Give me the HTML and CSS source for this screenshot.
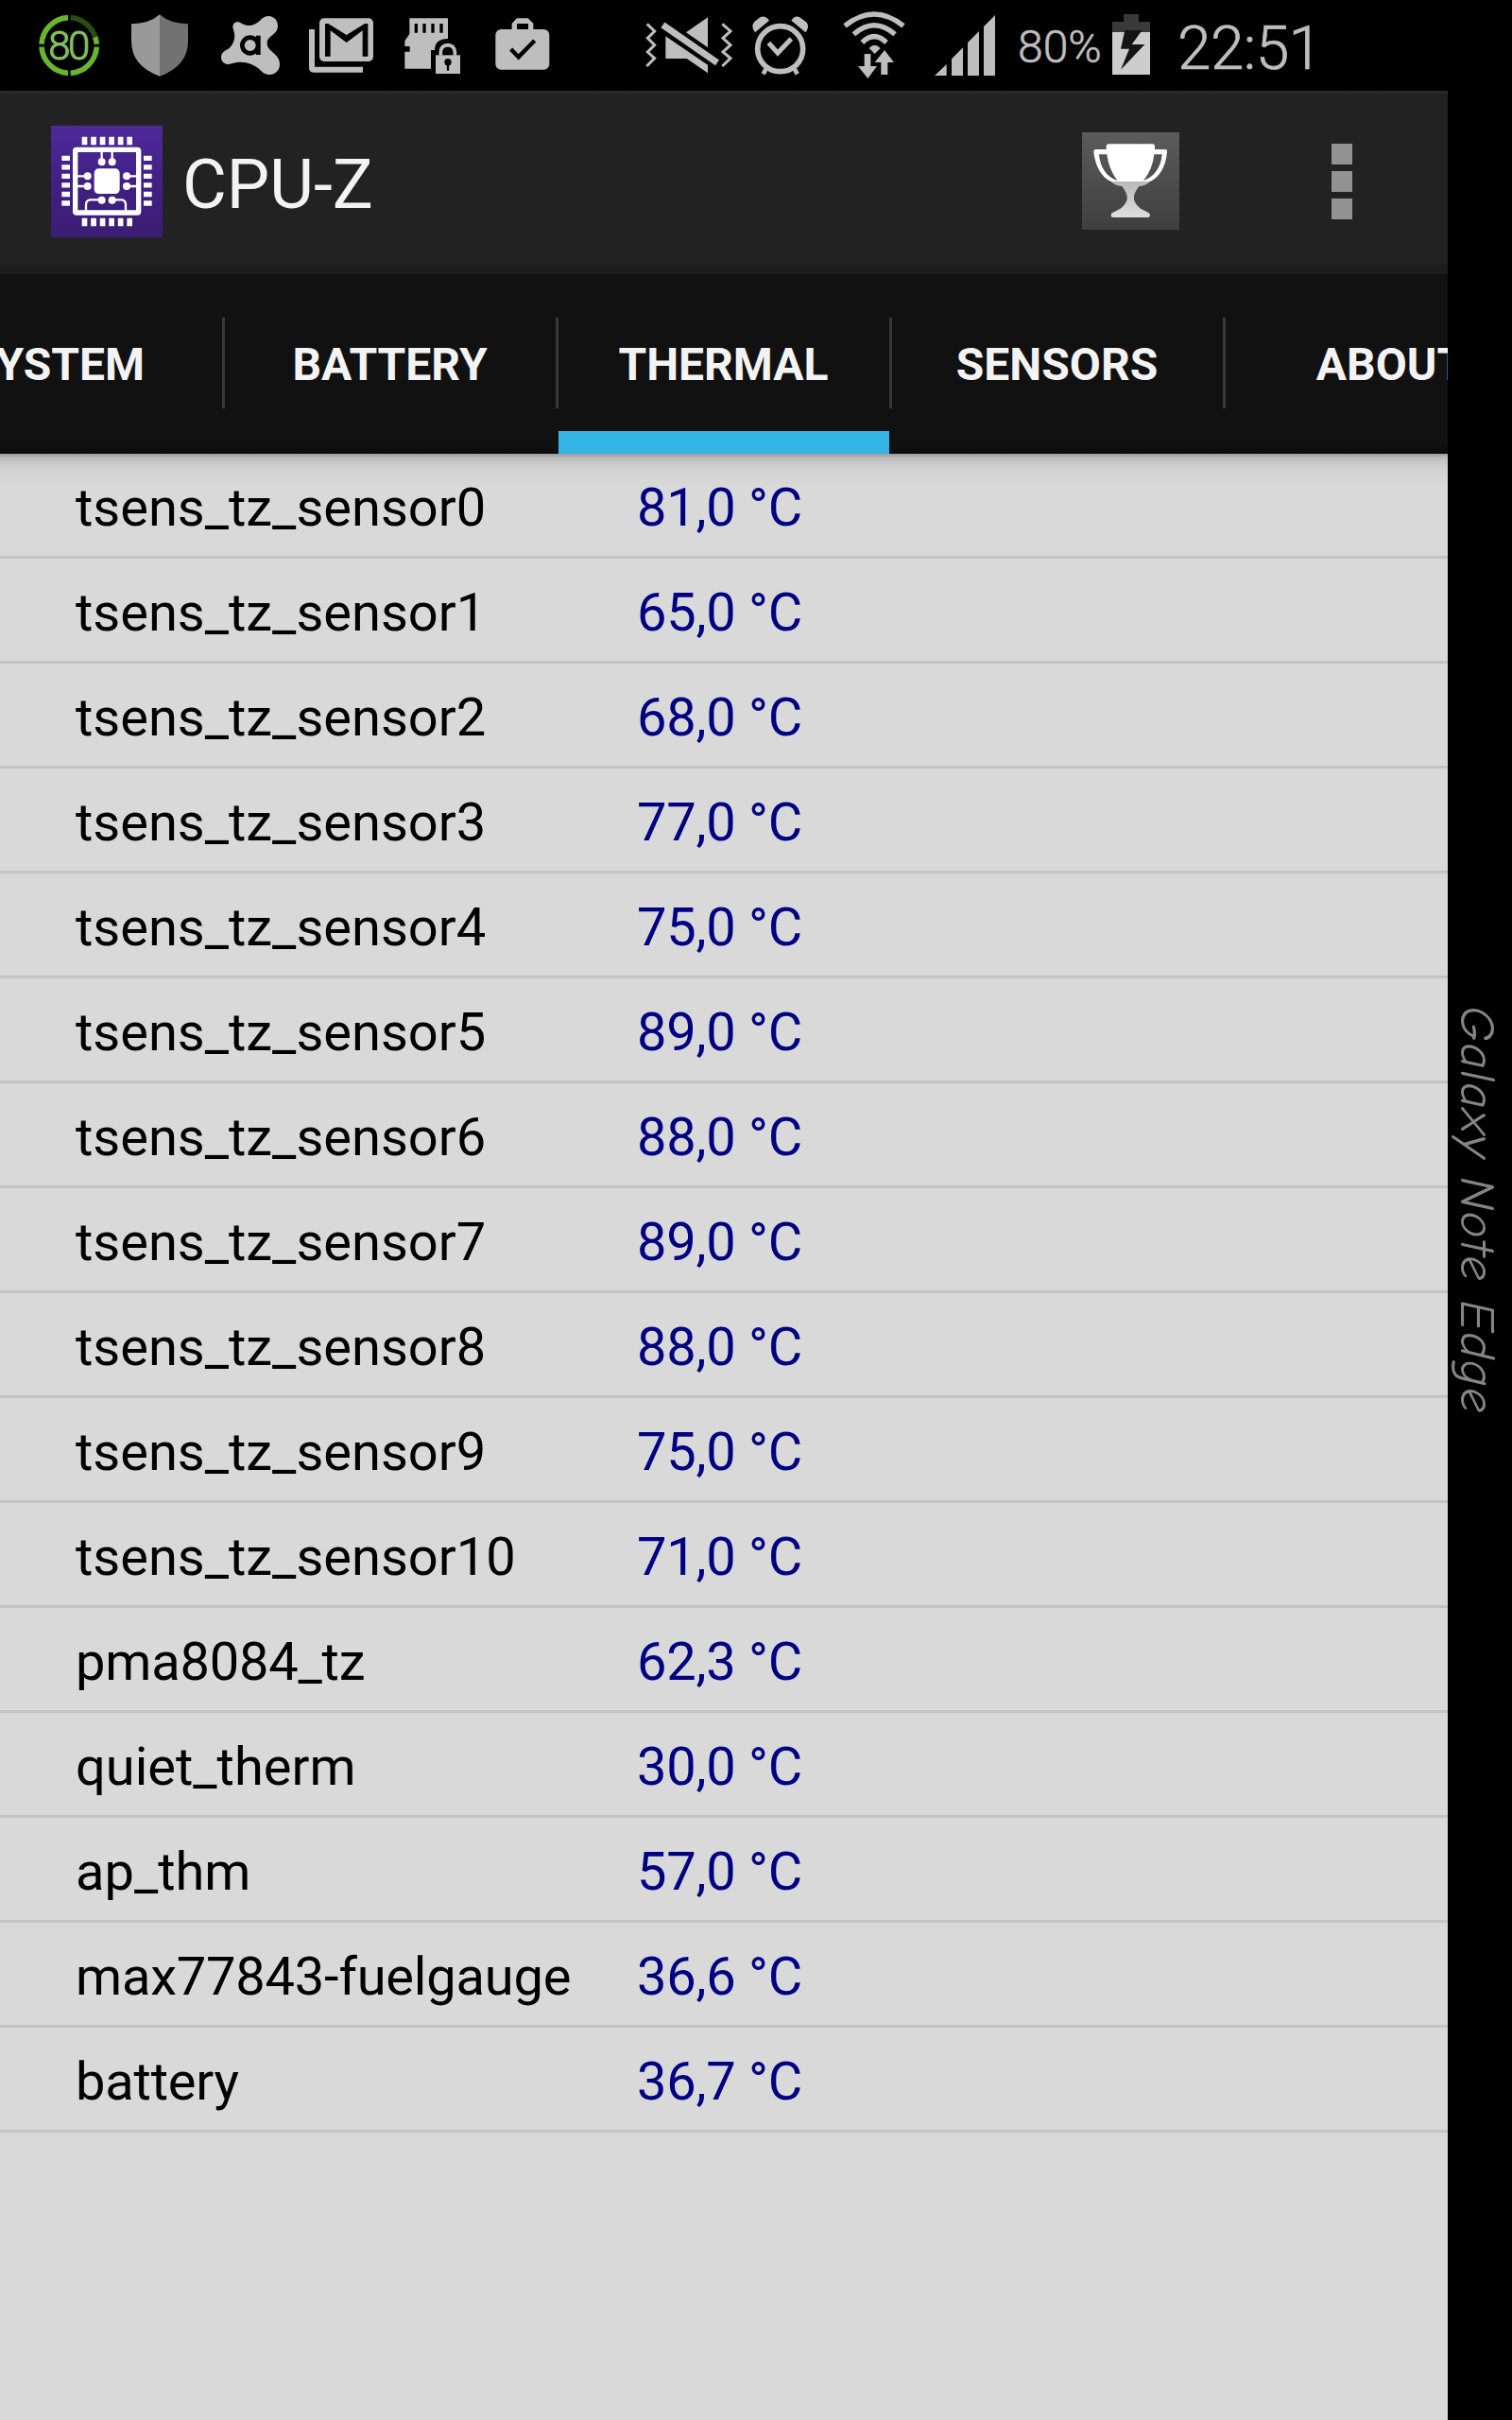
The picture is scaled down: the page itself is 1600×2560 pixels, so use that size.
FILE: index.html
```html
<!DOCTYPE html>
<html lang="en">
<head>
    <meta charset="UTF-8">
    <meta name="viewport" content="width=device-width, initial-scale=1.0">
    <title>CPU-Z</title>
    <link rel="stylesheet" href="styles.css">
</head>
<body>
    <div class="status-bar">
        <div class="notis">
            <svg class="icon" viewBox="75 0 288 288">
                <g fill="none" stroke="#68b52f" stroke-width="17">
                    <path d="M216 56A89 89 0 0 0 132 140"/>
                    <path d="M132 149A89 89 0 0 0 216 232"/>
                    <path d="M224 232A89 89 0 0 0 307 149"/>
                    <path d="M224 56A89 89 0 0 1 303 120" stroke="#294d13"/>
                    <path d="M302 118Q306 129 307 140"/>
                </g>
                <text class="ring-text" x="216" y="188">80</text>
            </svg>
            <svg class="icon" viewBox="363 0 288 288">
                <path fill="#999" d="M507 46Q475 75 417 76V130Q417 210 507 242z"/>
                <path fill="#727272" d="M507 46Q539 75 597 76V130Q597 210 507 242z"/>
            </svg>
            <svg class="icon" viewBox="651 0 288 288">
                <path fill="#bebebe" d="M768 75Q796 91 825 66C846 38 882 52 882 82C882 112 848 112 848 138C848 165 889 169 888 205C887 237 850 248 828 224C803 199 765 191 735 202C718 209 701 197 702 180C704 160 724 161 735 145C748 124 746 111 740 91C735 72 754 64 768 75z"/>
                <g fill="none" stroke="#000" stroke-width="14">
                    <circle cx="794" cy="144" r="25"/>
                    <path d="M820 113V174"/>
                </g>
            </svg>
            <svg class="icon" viewBox="9 0 288 288">
                <path fill="#bebebe" d="M51 93H69V212H222V230H65Q51 230 51 214z"/>
                <rect x="84" y="58" width="171" height="137" rx="15" fill="#bebebe"/>
                <path fill="#000" d="M102 179V75H112L170 111L228 75H238V179H221V97L170 135L119 97V179z"/>
            </svg>
            <svg class="icon" viewBox="297 0 288 288">
                <path fill="#bebebe" d="M370 58H492V123Q450 123 450 159H438V218H355V164H371V147H355V130L370 108z"/>
                <path stroke="#000" stroke-width="10" d="M391 75V104M417 75V104M444 75V104M471 75V104"/>
                <path fill="none" stroke="#bebebe" stroke-width="11" d="M469 176V165Q470 144 492 143Q512 144 514 165V176"/>
                <rect x="453" y="175" width="78" height="59" fill="#bebebe"/>
                <circle cx="492" cy="197" r="11"/>
                <path stroke="#000" stroke-width="7" d="M492 200V224"/>
            </svg>
            <svg class="icon" viewBox="585 0 288 288">
                <rect x="643" y="93" width="171" height="128" rx="18" fill="#bebebe"/>
                <path fill="#bebebe" fill-rule="evenodd" d="M695 94V74L711 58H746L763 74V94zM711 75V93H747V75z"/>
                <path fill="none" stroke="#000" stroke-width="13" d="M692 156L716 181L767 129"/>
            </svg>
        </div>
        <div class="system">
            <svg class="icon-sys" viewBox="60 0 294 288">
                <g fill="none" stroke="#bebebe" stroke-width="9">
                    <path d="M74 76L98 99L76 121L98 143L76 165L98 185L73 210"/>
                    <path d="M313 76L339 99L315 121L339 143L315 165L339 185L313 210"/>
                </g>
                <path fill="#bebebe" d="M133 115L267 206V232L200 186H133zM267 55V151L198 103z"/>
                <path stroke="#bebebe" stroke-width="21" d="M124 79L297 199"/>
            </svg>
            <svg class="icon-sys" viewBox="354 0 294 288">
                <g fill="none" stroke="#bebebe">
                    <circle cx="497" cy="155" r="72" stroke-width="17"/>
                    <path stroke-width="15" d="M460 136L489 168L532 123"/>
                    <path stroke-width="14" d="M453 216L443 235M541 216L551 235"/>
                </g>
                <path fill="#bebebe" d="M417 103Q402 85 415 69L433 55Q448 47 462 65zM577 103Q591 85 581 71L559 55Q545 47 532 65z"/>
            </svg>
            <svg class="icon-sys" viewBox="648 0 294 288">
                <g fill="none" stroke="#bebebe" stroke-width="16">
                    <path d="M702 82Q795 8 888 82"/>
                    <path d="M730 109Q795 52 861 109"/>
                    <path d="M757 135Q795 97 834 135"/>
                </g>
                <path fill="#bebebe" d="M779 153Q796 134 815 153L797 171zM764 171H784V210H804L775 249L744 210H764zM828 159L858 198H838V237H817V198H797z"/>
            </svg>
            <svg class="icon-sys" viewBox="942 0 294 288">
                <path fill="#bebebe" d="M987 240L1025 204V240zM1041 240V187L1077 151V240zM1092 240V135L1128 99V240zM1143 240V84L1179 48V240z"/>
            </svg>
            <span class="percent">80%</span>
            <svg class="battery" viewBox="414 0 120 288">
                <path fill="#393939" d="M450 45H498V69H534V102H414V69H450z"/>
                <path fill="#cdcdcd" d="M414 102H534V237H414z"/>
                <path fill="#151515" d="M454 96H509L476 141H517L441 221L468 155H441z"/>
            </svg>
            <span class="clock">22:51</span>
        </div>
    </div>
    <div class="screen">
        <div class="app">
            <div class="action-bar">
                <svg class="logo" viewBox="162 129 354 354">
                    <defs>
                        <linearGradient id="purple" x2="0" y2="1">
                            <stop stop-color="#4e2a99"/>
                            <stop offset=".5" stop-color="#412083"/>
                            <stop offset="1" stop-color="#3a1d73"/>
                        </linearGradient>
                    </defs>
                    <rect x="162" y="129" width="354" height="354" fill="url(#purple)"/>
                    <g fill="none" stroke="#fff">
                        <rect x="239" y="205" width="201" height="200" rx="4" stroke-width="16"/>
                        <g stroke-width="26">
                            <path stroke-dasharray="17 11.6" d="M260 177H421M260 435H421"/>
                            <path stroke-dasharray="16 12.6" d="M209 224V384M469 224V384"/>
                        </g>
                        <path stroke-width="7" d="M323 212V244M356 212V244M246 289H278M246 321H278M402 289H433M402 321H433M323 364H286Q273 366 273 380V399M356 364H387Q399 366 399 380V399"/>
                    </g>
                    <g fill="#fff">
                        <rect x="299" y="265" width="81" height="80" rx="14"/>
                        <circle cx="323" cy="244" r="12"/><circle cx="356" cy="244" r="12"/>
                        <circle cx="278" cy="289" r="12"/><circle cx="278" cy="321" r="12"/>
                        <circle cx="402" cy="289" r="12"/><circle cx="402" cy="321" r="12"/>
                        <circle cx="323" cy="365" r="12"/><circle cx="356" cy="365" r="12"/>
                    </g>
                </svg>
                <h1 class="title">CPU-Z</h1>
                <svg class="trophy" viewBox="75 90 309 309">
                    <defs>
                        <linearGradient id="grey" x2="0" y2="1">
                            <stop stop-color="#5b5b5b"/>
                            <stop offset="1" stop-color="#3f3f3f"/>
                        </linearGradient>
                        <linearGradient id="foot" x2="0" y2="1">
                            <stop stop-color="#b9b9b9"/>
                            <stop offset="1" stop-color="#dedede"/>
                        </linearGradient>
                    </defs>
                    <rect x="75" y="90" width="309" height="309" fill="url(#grey)"/>
                    <path fill="#fff" fill-rule="evenodd" d="M159 127H299Q306 127 306 134V144H339Q346 144 345 152C341 198 321 233 291 246H167C137 233 117 198 112 152Q112 144 119 144H152V134Q152 127 159 127zM129 160C132 201 153 232 187 243Q160 208 154 160zM329 160C326 201 304 232 270 243Q299 208 304 160z"/>
                    <path fill="url(#foot)" d="M167 246H291Q278 259 256 261C234 291 234 306 256 328C270 341 291 342 291 353Q291 360 284 360H174Q167 360 167 353C167 342 188 341 202 328C224 306 224 291 202 261Q180 259 167 246z"/>
                </svg>
                <div class="overflow"><i></i><i></i><i></i></div>
            </div>
            <div class="tabs">
                <div class="tab">SYSTEM</div>
                <div class="tab">BATTERY</div>
                <div class="tab active">THERMAL</div>
                <div class="tab">SENSORS</div>
                <div class="tab">ABOUT</div>
            </div>
            <ul class="list">
                <li><span class="name">tsens_tz_sensor0</span><span class="value">81,0 °C</span></li>
                <li><span class="name">tsens_tz_sensor1</span><span class="value">65,0 °C</span></li>
                <li><span class="name">tsens_tz_sensor2</span><span class="value">68,0 °C</span></li>
                <li><span class="name">tsens_tz_sensor3</span><span class="value">77,0 °C</span></li>
                <li><span class="name">tsens_tz_sensor4</span><span class="value">75,0 °C</span></li>
                <li><span class="name">tsens_tz_sensor5</span><span class="value">89,0 °C</span></li>
                <li><span class="name">tsens_tz_sensor6</span><span class="value">88,0 °C</span></li>
                <li><span class="name">tsens_tz_sensor7</span><span class="value">89,0 °C</span></li>
                <li><span class="name">tsens_tz_sensor8</span><span class="value">88,0 °C</span></li>
                <li><span class="name">tsens_tz_sensor9</span><span class="value">75,0 °C</span></li>
                <li><span class="name">tsens_tz_sensor10</span><span class="value">71,0 °C</span></li>
                <li><span class="name tight">pma8084_tz</span><span class="value">62,3 °C</span></li>
                <li><span class="name">quiet_therm</span><span class="value">30,0 °C</span></li>
                <li><span class="name">ap_thm</span><span class="value">57,0 °C</span></li>
                <li><span class="name tight">max77843-fuelgauge</span><span class="value">36,6 °C</span></li>
                <li><span class="name tight">battery</span><span class="value">36,7 °C</span></li>
            </ul>
        </div>
        <div class="edge"><span class="edge-text">Galaxy Note Edge</span></div>
    </div>
</body>
</html>
```
FILE: styles.css
```css
*{margin:0; padding:0; box-sizing:border-box}
body{width:1600px; height:2560px; background:#000; font-family:Roboto, sans-serif; overflow:hidden}
svg{display:block; flex-shrink:0}

.status-bar{height:96px; display:flex; align-items:center; padding-left:25px; color:#bebebe}
.notis{display:flex; margin-right:79px}
.icon{width:96px; height:96px}
.system{display:flex; align-items:center}
.icon-sys{width:98px; height:96px}
.ring-text{font-size:125px; font-weight:300; fill:#84bf5a; stroke:#84bf5a; stroke-width:3px; text-anchor:middle; letter-spacing:-7px}
.percent{width:101px; margin-left:5px; font-size:48px; font-weight:300; line-height:96px; padding-top:3px; -webkit-text-stroke:.6px #bebebe}
.battery{width:40px; height:96px; margin-left:-1px}
.clock{font-size:64px; font-weight:300; line-height:96px; padding-top:7px; margin-left:29px; letter-spacing:-.6px; -webkit-text-stroke:.7px #bebebe}

.screen{display:flex; height:2464px}
.app{width:1532px; background:#d9d9d9; overflow:hidden}
.action-bar{height:194px; display:flex; align-items:center; padding:0 101px 0 54px; background:linear-gradient(#303030 0, #222 4px, #222 183px, #1c1c1c 184px)}
.logo{width:118px; height:118px; margin-bottom:2px}
.title{margin:6px auto 0 21px; font-size:72px; font-weight:400; line-height:84px; color:#f3f3f3}
.trophy{width:103px; height:103px; margin-right:161px; margin-bottom:3px}
.overflow{display:flex; flex-direction:column; gap:7px; margin-bottom:2px}
.overflow i{width:22px; height:22px; background:#929292}

.tabs{height:190px; display:flex; margin-left:-115px; width:1765px; overflow:hidden; background:linear-gradient(#111 180px, #0c0c0c)}
.tab{width:353px; flex-shrink:0; padding-right:4px; text-align:center; font-size:48px; font-weight:700; line-height:192px; color:#f3f3f3; background:linear-gradient(#393939, #393939) no-repeat right 46px / 3px 96px}
.tab.active{background:linear-gradient(#393939, #393939) no-repeat right 46px / 3px 96px, linear-gradient(#33b5e5, #33b5e5) no-repeat left bottom / 350px 24px}

.list{list-style:none; background:linear-gradient(#999, #b4b4b4 3px, #c5c5c5 8px, #d2d2d2 17px, #d9d9d9 36px)}
.list li{height:111px; padding-left:80px; display:flex; border-bottom:3px solid #c4c4c4; font-size:56px; line-height:115px}
.name{width:594px; color:#000}
.name.tight{letter-spacing:-.2px}
.value{color:#000083; letter-spacing:-.25px}

.edge{width:68px; display:flex; justify-content:center; padding-top:968px}
.edge-text{writing-mode:vertical-rl; font-family:"Comic Neue", "Segoe Print", Lato, cursive; font-style:italic; font-weight:400; font-size:53px; line-height:68px; letter-spacing:1.5px; color:#858585; white-space:nowrap; margin-right:6px}
```
